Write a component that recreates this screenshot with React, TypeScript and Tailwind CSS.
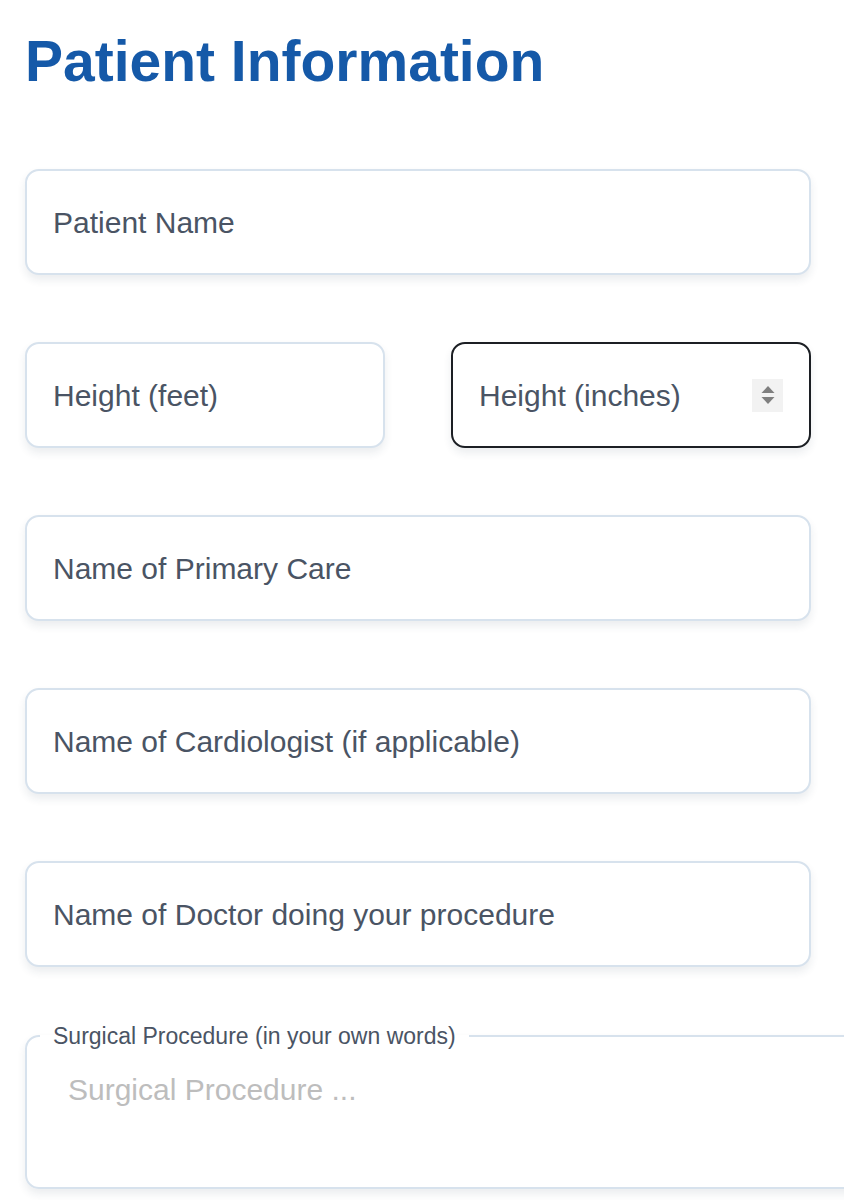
import React from 'react'

const font = { fontFamily: '"Liberation Sans", Arial, Helvetica, sans-serif' }

const boxClass =
  'flex h-[106px] items-center rounded-[14px] border-2 bg-white px-[26px] shadow-[0_5px_9px_rgba(30,50,80,0.09)]'

function Field({ label, focused }: { label: string; focused?: boolean }) {
  return (
    <div className={`${boxClass} ${focused ? 'border-[#1c1f24]' : 'border-[#d7e2ed]'}`}>
      <input
        type="text"
        placeholder={label}
        className="min-w-0 flex-1 bg-transparent text-[30px] text-[#4a5464] outline-none placeholder:text-[#4a5464]"
        style={font}
      />
      {focused && (
        <span className="flex h-[33px] w-[31px] items-center justify-center bg-[#f2f2f2]">
          <svg width="16" height="24" viewBox="0 0 16 24" fill="#7f7f7f">
            <path d="M8 3L14.5 10H1.5Z" />
            <path d="M8 21L14.5 14H1.5Z" />
          </svg>
        </span>
      )}
    </div>
  )
}

export default function App() {
  return (
    <div className="min-h-[1200px] w-full overflow-hidden bg-white" style={font}>
      <div className="pl-[25px] pr-[33px] pt-[33px]">
        <h1 className="text-[57px] font-bold leading-none text-[#1559a8]">
          Patient Information
        </h1>

        <div className="mt-[79px] flex flex-col gap-[67px]">
          <Field label="Patient Name" />
          <div className="grid grid-cols-2 gap-[66px]">
            <Field label="Height (feet)" />
            <Field label="Height (inches)" focused />
          </div>
          <Field label="Name of Primary Care" />
          <Field label="Name of Cardiologist (if applicable)" />
          <Field label="Name of Doctor doing your procedure" />
        </div>

        <fieldset className="mt-[55px] h-[167px] w-[860px] rounded-[14px] border-2 border-[#d7e2ed] pl-[13px] shadow-[0_5px_9px_rgba(30,50,80,0.09)]">
          <legend className="px-[13px] text-[23px] leading-[28px] text-[#4a5464]">
            Surgical Procedure (in your own words)
          </legend>
          <textarea
            placeholder="Surgical Procedure ..."
            className="mt-[22px] h-[90px] w-full resize-none bg-transparent pl-[28px] text-[30px] leading-[36px] text-[#4a5464] outline-none placeholder:text-[#bdbdbd]"
            style={font}
          />
        </fieldset>
      </div>
    </div>
  )
}
